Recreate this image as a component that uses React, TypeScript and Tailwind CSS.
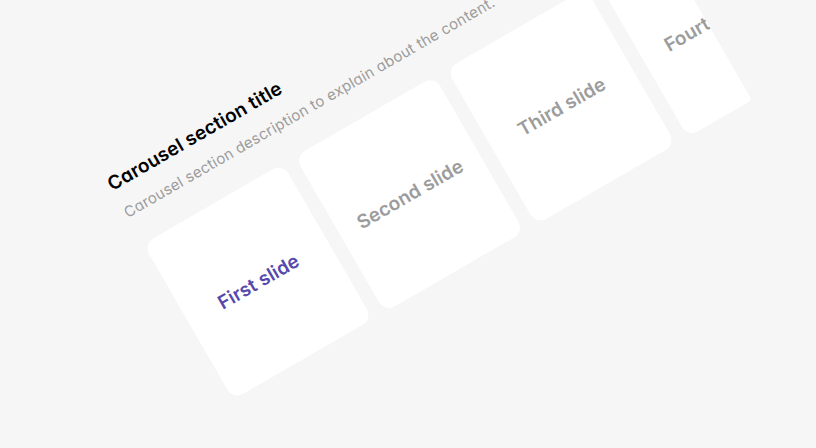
import React from "react";

type Slide = { label: string; active?: boolean };

const slides: Slide[] = [
  { label: "First slide", active: true },
  { label: "Second slide" },
  { label: "Third slide" },
  { label: "Fourth slide" },
];

function SlideCard({ label, active }: Slide) {
  return (
    <article
      className={`flex h-[180px] w-[161px] shrink-0 items-center justify-center rounded-xl bg-white pt-[2px] pl-px text-[19px] leading-6 font-semibold tracking-[0.1px] whitespace-nowrap ${
        active ? "text-[#5549ac]" : "text-[#9c9c9c]"
      }`}
    >
      {label}
    </article>
  );
}

export default function App() {
  return (
    <main className="h-[448px] w-[816px] overflow-hidden bg-[#f6f6f6] pt-[173px] pl-[100px] font-['Inter',sans-serif] [font-feature-settings:'cv11','ss03']">
      <section className="w-[601px] origin-top-left -rotate-30">
        <h1 className="pl-[1.5px] text-[19px] leading-[31px] font-semibold tracking-[0.15px] whitespace-nowrap text-black">
          Carousel section title
        </h1>
        <p className="mt-[6px] pl-[1.5px] text-[15px] leading-[22px] tracking-[0.25px] whitespace-nowrap text-[#9c9c9c]">
          Carousel section description to explain about the content.
        </p>
        <div className="mt-[24px] flex gap-[14px] overflow-hidden rounded-br-[4px] pl-[2px]">
          {slides.map((slide) => (
            <SlideCard key={slide.label} {...slide} />
          ))}
        </div>
      </section>
    </main>
  );
}
